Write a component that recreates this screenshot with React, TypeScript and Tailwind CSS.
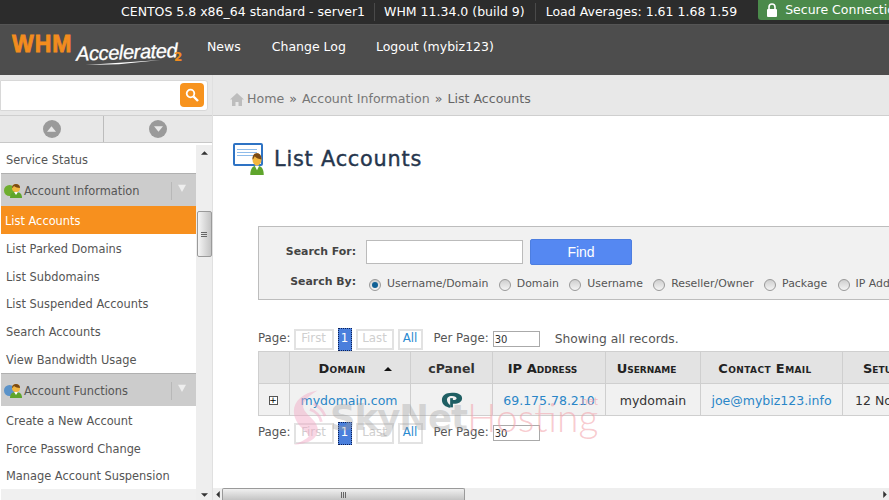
import React from "react";

const font = { fontFamily: '"DejaVu Sans", sans-serif' };
const arial = { fontFamily: '"Liberation Sans", sans-serif' };

const Person = ({ className }: { className?: string }) => (
  <svg viewBox="0 0 16 16" preserveAspectRatio="none" className={className}>
    <path d="M2 16c0-4 2-6 6-6s6 2 6 6z" fill="#5fa52c" />
    <path d="M6 10l2 3 2-3z" fill="#fff" />
    <circle cx="8" cy="6" r="4" fill="#f3b73f" />
    <path d="M4 6c0-3 2-4 4-4s4 1 4 4c-2 0-5-1-6-2-1 1-1 2-2 2z" fill="#7a4a16" />
  </svg>
);

const SideGroup = ({ label, kind }: { label: string; kind: "info" | "gear" }) => (
  <div className="h-[33px] shrink-0 bg-[#cccccc] border-t border-[#b0b0b0] flex items-center pl-[3px] relative">
    <span className="relative w-5 h-4 shrink-0">
      <span
        className={
          kind === "info"
            ? "absolute left-0 top-[3px] w-[11px] h-[11px] rounded-full bg-[#6fae2e]"
            : "absolute left-0 top-[3px] w-[11px] h-[11px] rounded-full bg-[#5b93c9]"
        }
      />
      <Person className="absolute left-[4px] top-0 w-4 h-4" />
    </span>
    <span className="pt-[3px] text-[11.4px] text-[#555]">{label}</span>
    <span className="absolute left-[170px] top-2 h-[18px] border-l border-[#b8b8b8]" />
    <svg viewBox="0 0 10 10" className="absolute left-[177px] top-[10px] w-2 h-2">
      <path d="M0 1h10L5 10z" fill="#eeeeee" />
    </svg>
  </div>
);

const SideItem = ({ label }: { label: string }) => (
  <div className="h-[27.8px] shrink-0 flex items-center pt-[3px] pl-[5px] text-[11.4px] text-[#555] whitespace-nowrap">{label}</div>
);

const Radio = ({ on }: { on?: boolean }) => (
  <span className="w-[12px] h-[12px] mt-[2px] rounded-full border border-[#999] bg-gradient-to-b from-[#cfcfcf] to-[#f4f4f4] flex items-center justify-center shrink-0">
    {on && <span className="w-[6px] h-[6px] rounded-full bg-[#0f5f94]" />}
  </span>
);

const RadioOpt = ({ label, on }: { label: string; on?: boolean }) => (
  <span className="flex items-center gap-[6px] whitespace-nowrap">
    <Radio on={on} />
    <span>{label}</span>
  </span>
);

const Pager = ({ showing }: { showing?: boolean }) => (
  <div className="flex items-center text-[11.8px] text-[#555] h-[22px] whitespace-nowrap">
    <span>Page:</span>
    <span className="ml-[3px] flex items-center gap-[4px]">
      <span className="w-[40px] h-[21px] border-2 border-[#e2e2e2] text-[#cfcfcf] flex items-center justify-center">First</span>
      <span className="w-[14px] h-[23px] bg-[#4a7fdc] border border-dotted border-[#0b1f55] text-white flex items-center justify-center">1</span>
      <span className="w-[38px] h-[21px] border-2 border-[#e2e2e2] text-[#cfcfcf] flex items-center justify-center">Last</span>
      <span className="w-[25px] h-[21px] border-2 border-[#e2e2e2] text-[#2a8ad0] flex items-center justify-center">All</span>
    </span>
    <span className="ml-[11px]">Per Page:</span>
    <span className="ml-[4px] w-[47px] h-[16px] border border-[#aaa] bg-white text-[10px] text-[#333] flex items-center pl-[1px]">30</span>
    {showing && <span className="ml-[15px] text-[12.3px]">Showing all records.</span>}
  </div>
);

export default function App() {
  return (
    <div className="w-[889px] h-[500px] overflow-hidden bg-white flex flex-col relative" style={font}>
      {/* top status bar */}
      <div className="h-[25px] shrink-0 bg-[#2c2c2c] border-b border-[#555] flex items-center pl-[121px] text-[12.5px] text-white whitespace-nowrap">
        <span>CENTOS 5.8 x86_64 standard - server1</span>
        <span className="mx-[9px] h-[18px] border-l border-[#4a4a4a]" />
        <span>WHM 11.34.0 (build 9)</span>
        <span className="mx-[10px] h-[18px] border-l border-[#4a4a4a]" />
        <span>Load Averages: 1.61 1.68 1.59</span>
        <span className="ml-[21px] self-start h-[20px] pl-2 w-[140px] shrink-0 bg-[#4b8a4b] rounded-bl-[3px] flex items-center gap-[7px] overflow-hidden">
          <svg viewBox="0 0 12 14" className="w-[12px] h-[14px] shrink-0">
            <path d="M3 6V4a3 3 0 016 0v2" fill="none" stroke="#fff" strokeWidth="1.6" />
            <rect x="1" y="6" width="10" height="8" rx="1" fill="#fff" />
          </svg>
          <span>Secure Connection</span>
        </span>
      </div>

      {/* main header */}
      <div className="h-[50px] shrink-0 bg-[#4d4d4d] flex items-center pb-[6px] text-[12.5px] text-white whitespace-nowrap">
        <div className="w-[207px] shrink-0 pl-[12px] h-[44px] relative">
          <span className="absolute left-[12px] top-[6px] text-[23px] leading-[26px] font-bold text-[#f28c1e] tracking-[1px] [-webkit-text-stroke:0.8px_#f28c1e]" style={arial}>
            WHM
          </span>
          <span className="absolute left-[76px] top-[14px] text-[20px] leading-[26px] italic text-white tracking-[-0.4px] -rotate-2 [-webkit-text-stroke:0.3px_#fff]" style={arial}>
            Accelerated
          </span>
          <svg viewBox="0 0 90 6" className="absolute left-[78px] top-[35px] w-[90px] h-[5px]">
            <path d="M0 6L90 0 40 5z" fill="#fff" />
          </svg>
          <span className="absolute left-[174px] top-[24px] text-[12px] leading-[16px] font-bold text-[#f28c1e]">2</span>
        </div>
        <span>News</span>
        <span className="ml-[31px]">Change Log</span>
        <span className="ml-[30px]">Logout (mybiz123)</span>
      </div>

      <div className="flex-1 flex min-h-0">
        {/* sidebar */}
        <div className="w-[213px] shrink-0 flex flex-col border-r border-[#e0e0e0]">
          <div className="h-[41px] shrink-0 bg-[#e8e8e8] border-b border-[#cfcfcf] pr-[4px] flex items-center">
            <div className="flex-1 h-[31px] bg-white border border-[#d8d8d8] rounded-r-[3px] flex items-center justify-end pr-[3px]">
              <span className="w-[24px] h-[24px] bg-[#f7931e] rounded-[4px] flex items-center justify-center">
                <svg viewBox="0 0 14 14" className="w-[14px] h-[14px]">
                  <circle cx="5.5" cy="5.5" r="3.8" fill="none" stroke="#fff" strokeWidth="1.8" />
                  <path d="M8.5 8.5L13 13" stroke="#fff" strokeWidth="2.4" />
                </svg>
              </span>
            </div>
          </div>
          <div className="h-[27px] shrink-0 bg-[#e8e8e8] border-b border-[#c8c8c8] flex">
            <div className="w-[104px] border-r border-[#bcbcbc] flex items-center justify-center">
              <span className="w-[18px] h-[18px] rounded-full bg-[#9a9a9a] flex items-center justify-center">
                <svg viewBox="0 0 10 6" className="w-[9px] h-[6px]"><path d="M0 6L5 0l5 6z" fill="#e8e8e8" /></svg>
              </span>
            </div>
            <div className="flex-1 flex items-center justify-center">
              <span className="w-[18px] h-[18px] rounded-full bg-[#9a9a9a] flex items-center justify-center">
                <svg viewBox="0 0 10 6" className="w-[9px] h-[6px]"><path d="M0 0l5 6 5-6z" fill="#e8e8e8" /></svg>
              </span>
            </div>
          </div>
          <div className="flex-1 flex min-h-0 pt-[2px]">
            <div className="w-[196px] pl-[1px] shrink-0 flex flex-col overflow-hidden">
              <div className="h-[28px] shrink-0 flex items-center pt-[3px] pl-[5px] text-[11.4px] text-[#555]">Service Status</div>
              <SideGroup label="Account Information" kind="info" />
              <div className="h-[28px] shrink-0 bg-[#f7901e] text-white text-[11.4px] flex items-center pt-[3px] pl-[4px]">List Accounts</div>
              <SideItem label="List Parked Domains" />
              <SideItem label="List Subdomains" />
              <SideItem label="List Suspended Accounts" />
              <SideItem label="Search Accounts" />
              <SideItem label="View Bandwidth Usage" />
              <SideGroup label="Account Functions" kind="gear" />
              <SideItem label="Create a New Account" />
              <SideItem label="Force Password Change" />
              <SideItem label="Manage Account Suspension" />
              <div className="flex-1 bg-[#f0f0f0]" />
            </div>
            {/* sidebar scrollbar */}
            <div className="flex-1 bg-[#eeeeee] flex flex-col items-center relative">
              <svg viewBox="0 0 8 4" className="w-[7px] h-[4px] mt-[6px]"><path d="M0 4l4-4 4 4z" fill="#333" /></svg>
              <div className="mt-[56px] w-[15px] h-[46px] rounded-[2px] border border-[#9a9a9a] bg-gradient-to-r from-[#f5f5f5] to-[#c4c4c4] flex flex-col items-center justify-center gap-[1px]">
                <span className="w-[6px] border-t border-[#666]" />
                <span className="w-[6px] border-t border-[#666]" />
                <span className="w-[6px] border-t border-[#666]" />
              </div>
              <svg viewBox="0 0 8 4" className="w-[7px] h-[4px] mt-auto mb-[3px]"><path d="M0 0l4 4 4-4z" fill="#333" /></svg>
            </div>
          </div>
        </div>

        {/* main column */}
        <div className="flex-1 min-w-0 flex flex-col">
          <div className="h-[41px] shrink-0 bg-[#e8e8e8] border-b border-[#cfcfcf] flex items-center pt-[9px] pl-[17px] text-[12.6px] text-[#777] whitespace-nowrap">
            <svg viewBox="0 0 14 13" className="w-[14px] h-[13px] mr-[3px]">
              <path d="M7 0L0 6.5h2V13h3.5V9h3v4H12V6.5h2z" fill="#bdbdbd" />
            </svg>
            <span>Home</span>
            <span className="mx-[5px] text-[#666]">»</span>
            <span>Account Information</span>
            <span className="mx-[5px] text-[#666]">»</span>
            <span className="text-[#666]">List Accounts</span>
          </div>

          <div className="flex-1 min-h-0 overflow-hidden relative">
            {/* page title */}
            <div className="pl-[20px] pt-[27px] flex items-start h-[110px]">
              <span className="relative w-[32px] h-[32px] shrink-0">
                <span className="absolute left-0 top-0 w-[30px] h-[23px] bg-white border-2 border-[#2e73c4] rounded-[2px] flex flex-col gap-[2px] pl-[2px] pt-[4px]">
                  <span className="w-[20px] border-t border-[#8fbcea]" />
                  <span className="w-[20px] border-t border-[#8fbcea]" />
                  <span className="w-[20px] border-t border-[#8fbcea]" />
                </span>
                <Person className="absolute left-[15px] top-[7px] w-[18px] h-[25px]" />
              </span>
              <h1 className="ml-[9px] mt-[1px] text-[20.8px] leading-[30px] font-normal text-[#26364d] tracking-[0.8px] [-webkit-text-stroke:0.4px_#26364d]">
                List Accounts
              </h1>
            </div>

            {/* search panel */}
            <div className="ml-[45px] w-[700px] h-[74px] bg-[#f1f1f1] border border-[#bdbdbd] text-[10.9px] text-[#555]">
              <div className="flex items-center mt-[12px] h-[26px]">
                <span className="w-[97px] text-right font-bold text-[#444] whitespace-nowrap">Search For:</span>
                <span className="ml-[10px] w-[157px] h-[24px] bg-white border border-[#bbb]" />
                <span className="ml-[7px] w-[102px] h-[26px] bg-[#5588f2] border border-[#4d7ee0] rounded-[2px] text-white text-[14px] flex items-center justify-center" style={arial}>
                  Find
                </span>
              </div>
              <div className="flex items-center mt-[9px] h-[20px]">
                <span className="w-[97px] text-right font-bold text-[#444] -mt-[4px] whitespace-nowrap">Search By:</span>
                <span className="ml-[13px] flex items-center gap-[10.3px]">
                  <RadioOpt label="Username/Domain" on />
                  <RadioOpt label="Domain" />
                  <RadioOpt label="Username" />
                  <RadioOpt label="Reseller/Owner" />
                  <RadioOpt label="Package" />
                  <RadioOpt label="IP Address" />
                </span>
              </div>
            </div>

            {/* accounts table */}
            <div className="ml-[45px] mt-[28px] w-[760px]">
              <Pager showing />
              <table className="mt-[1px] table-fixed w-[760px] border-collapse text-[12.5px] text-[#333]">
                <colgroup>
                  <col className="w-[31px]" />
                  <col className="w-[121px]" />
                  <col className="w-[82px]" />
                  <col className="w-[113px]" />
                  <col className="w-[95px]" />
                  <col className="w-[142px]" />
                  <col className="w-[176px]" />
                </colgroup>
                <thead>
                  <tr className="h-[32px] bg-[#e3e3e3] text-[13px] text-[#222] font-bold [font-variant:small-caps]">
                    <th className="border border-[#cfcfcf] p-0" />
                    <th className="border border-[#cfcfcf] font-bold p-0 pt-[3px]">
                      <span className="inline-flex items-center gap-[18px] pl-[10px] tracking-[0.3px]">
                        Domain
                        <svg viewBox="0 0 8 4" className="w-[8px] h-[4px]"><path d="M0 4l4-4 4 4z" fill="#111" /></svg>
                      </span>
                    </th>
                    <th className="border border-[#cfcfcf] font-bold text-[#333] text-[12.5px] [font-variant:normal] p-0 pt-[3px]">cPanel</th>
                    <th className="border border-[#cfcfcf] font-bold p-0 pt-[3px] pr-[13px]">IP Address</th>
                    <th className="border border-[#cfcfcf] font-bold p-0 pt-[3px] pr-[13px]">Username</th>
                    <th className="border border-[#cfcfcf] font-bold p-0 pt-[3px] pr-[13px] tracking-[0.4px]">Contact Email</th>
                    <th className="border border-[#cfcfcf] font-bold text-left p-0 pt-[3px] pl-[20px]">Setup Date</th>
                  </tr>
                </thead>
                <tbody>
                  <tr className="h-[32px] bg-[#f1f1f1]">
                    <td className="border border-[#cfcfcf] text-center p-0">
                      <span className="inline-flex -ml-[2px] w-[9px] h-[9px] border border-[#555] bg-white text-[9px] leading-none items-center justify-center text-black">+</span>
                    </td>
                    <td className="border border-[#cfcfcf] text-center text-[#2a86c8] p-0 pt-[3px] pr-[2px]">mydomain.com</td>
                    <td className="border border-[#cfcfcf] text-center p-0">
                      <svg viewBox="0 0 24 18" className="inline w-[22px] h-[18px] align-middle">
                        <path d="M1 9C1 4 5 1 12 1c7 0 11 2 11 6s-4 6-9 6h-2V9h2c2 0 3-.8 3-2s-2-2.400-5-2.400C8 4.600 6.500 6.500 6.500 9c0 2.500 2 4.500 3.500 5.500V17.500C5 16.500 1 14 1 9z" fill="#1f5f63" />
                        <rect x="10" y="7" width="3" height="10" fill="#1f5f63" />
                      </svg>
                    </td>
                    <td className="border border-[#cfcfcf] text-center text-[#2a86c8] p-0 pt-[3px]">69.175.78.210</td>
                    <td className="border border-[#cfcfcf] text-center p-0 pt-[3px]">mydomain</td>
                    <td className="border border-[#cfcfcf] text-center text-[#2a86c8] p-0 pt-[3px]">joe@mybiz123.info</td>
                    <td className="border border-[#cfcfcf] whitespace-nowrap p-0 pt-[3px] pl-[12px]">12 Nov 12</td>
                  </tr>
                </tbody>
              </table>
              <div className="mt-[6px]">
                <Pager />
              </div>
            </div>

            {/* watermark over the table */}
            <div className="absolute left-[76px] top-[272px] flex items-center pointer-events-none whitespace-nowrap">
              <svg viewBox="0 0 40 60" className="w-[38px] h-[58px] opacity-45">
                <path d="M30 2C12 5 2 16 6 30c3 10 12 14 15 20-3 4-10 7-16 9 16 0 27-7 25-18-2-9-13-13-15-21-1-6 5-12 15-18z" fill="#f3a6c4" />
                <path d="M22 22c6 2 11 7 12 13M26 16c6 3 10 8 12 13" fill="none" stroke="#f3a6c4" strokeWidth="3" />
              </svg>
              <span className="ml-[3px] text-[35.5px] font-bold text-[#9a9a9a]/35 tracking-[-1px]">SkyNet</span>
              <span className="text-[39px] font-light text-[#f2a0a8]/55" style={{ fontFamily: '"Lato", sans-serif' }}>
                Hosting
              </span>
              <span className="relative -top-[16px] -ml-[20px] text-[10px] text-[#f2a0a8]/70">.net</span>
            </div>
          </div>

          {/* horizontal scrollbar */}
          <div className="h-[12px] shrink-0 bg-[#eeeeee] flex items-center relative">
            <svg viewBox="0 0 4 8" className="absolute left-[3px] top-[3px] w-[4px] h-[7px]"><path d="M4 0L0 4l4 4z" fill="#333" /></svg>
            <div className="ml-[9px] w-[243px] h-[12px] rounded-t-[2px] border border-[#9a9a9a] border-b-0 bg-gradient-to-b from-[#f0f0f0] to-[#c4c4c4] flex items-center justify-center gap-[1px]">
              <span className="h-[6px] border-l border-[#666]" />
              <span className="h-[6px] border-l border-[#666]" />
              <span className="h-[6px] border-l border-[#666]" />
            </div>
            <svg viewBox="0 0 4 8" className="absolute right-[2px] top-[3px] w-[4px] h-[7px]"><path d="M0 0l4 4-4 4z" fill="#333" /></svg>
          </div>
        </div>
      </div>
    </div>
  );
}
